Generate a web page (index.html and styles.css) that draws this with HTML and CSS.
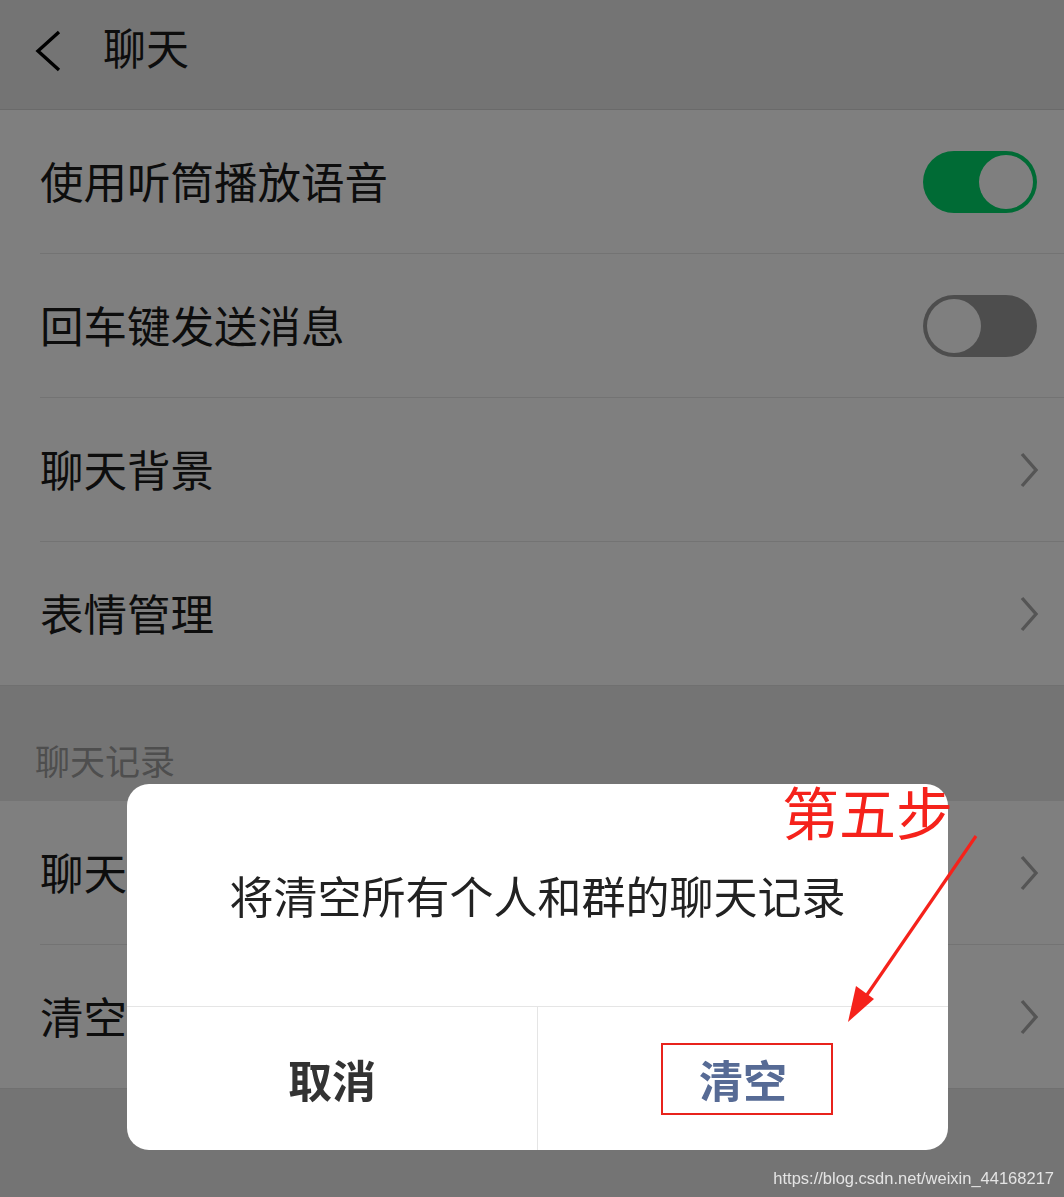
FILE: index.html
```html
<!DOCTYPE html>
<html lang="zh-CN">

<head>
    <meta charset="UTF-8">
    <meta name="viewport" content="width=device-width, initial-scale=1.0">
    <title>聊天</title>
    <link rel="stylesheet" href="styles.css">
</head>

<body>
    <header class="nav-bar">
        <svg class="back-icon" width="30" height="44" viewBox="0 0 30 44">
            <polyline points="25,3 4,22 25,41" fill="none" stroke="#000" stroke-width="3.4" stroke-linejoin="miter" />
        </svg>
        <h1 class="nav-title">聊天</h1>
    </header>

    <section class="group">
        <div class="cell">
            <span class="cell-label">使用听筒播放语音</span>
            <span class="switch on"><span class="knob"></span></span>
        </div>
        <div class="cell">
            <span class="cell-label">回车键发送消息</span>
            <span class="switch"><span class="knob"></span></span>
        </div>
        <div class="cell">
            <span class="cell-label">聊天背景</span>
            <svg class="arrow" width="20" height="38" viewBox="0 0 20 38">
                <polyline points="3,3 17,19 3,35" fill="none" stroke="#aaa" stroke-width="3.4" />
            </svg>
        </div>
        <div class="cell">
            <span class="cell-label">表情管理</span>
            <svg class="arrow" width="20" height="38" viewBox="0 0 20 38">
                <polyline points="3,3 17,19 3,35" fill="none" stroke="#aaa" stroke-width="3.4" />
            </svg>
        </div>
    </section>

    <div class="group-title">聊天记录</div>

    <section class="group">
        <div class="cell">
            <span class="cell-label">聊天记录迁移</span>
            <svg class="arrow" width="20" height="38" viewBox="0 0 20 38">
                <polyline points="3,3 17,19 3,35" fill="none" stroke="#aaa" stroke-width="3.4" />
            </svg>
        </div>
        <div class="cell">
            <span class="cell-label">清空聊天记录</span>
            <svg class="arrow" width="20" height="38" viewBox="0 0 20 38">
                <polyline points="3,3 17,19 3,35" fill="none" stroke="#aaa" stroke-width="3.4" />
            </svg>
        </div>
    </section>

    <div class="mask">
        <div class="dialog">
            <div class="dialog-body">将清空所有个人和群的聊天记录</div>
            <div class="dialog-footer">
                <div class="dialog-btn cancel">取消</div>
                <div class="dialog-btn confirm"><span class="mark-box">清空</span></div>
            </div>
        </div>

        <div class="step-note">第五步</div>
        <svg class="step-arrow" width="140" height="200" viewBox="0 0 140 200">
            <line x1="134" y1="4" x2="20" y2="170" stroke="#f5221b" stroke-width="3.2" />
            <polygon points="6,190 14,154 32,167" fill="#f5221b" />
        </svg>
    </div>

    <div class="watermark">https://blog.csdn.net/weixin_44168217</div>
</body>

</html>
```

FILE: styles.css
```css
body {
    margin: 0;
    width: 1064px;
    min-height: 1197px;
    background: #e9e9e9;
    font-family: "Noto Sans CJK SC", "Noto Sans", sans-serif;
    color: #1a1a1a;
    overflow: hidden;
    position: relative;
}

.nav-bar {
    height: 109px;
    display: flex;
    align-items: center;
    background: #e8e8e8;
    border-bottom: 1px solid #d4d4d4;
    box-sizing: content-box;
}

.back-icon {
    margin-left: 34px;
    margin-top: -8px;
}

.nav-title {
    margin: -17px 0 0 39px;
    font-size: 43px;
    font-weight: normal;
    line-height: 1;
}

.group {
    background: #fff;
    border-bottom: 1px solid #e0e0e0;
}

.cell {
    margin-left: 40px;
    padding-right: 27px;
    height: 143px;
    display: flex;
    align-items: center;
    justify-content: space-between;
    border-bottom: 1px solid #e6e6e6;
}

.cell:last-child {
    border-bottom: none;
    height: 143px;
}

.cell-label {
    font-size: 43.5px;
    line-height: 1;
    margin-top: -2px;
}

.switch {
    width: 114px;
    height: 62px;
    border-radius: 31px;
    background: #9b9b9b;
    display: flex;
    align-items: center;
    padding: 0 4px;
    box-sizing: border-box;
}

.switch.on {
    background: #00d66a;
    justify-content: flex-end;
}

.knob {
    width: 54px;
    height: 54px;
    border-radius: 50%;
    background: #fff;
}

.arrow {
    margin-right: -2px;
}

.group-title {
    height: 115px;
    padding-left: 35px;
    box-sizing: border-box;
    display: flex;
    align-items: flex-end;
    padding-bottom: 24px;
    font-size: 35px;
    line-height: 1;
    color: #9c9c9c;
}

.mask {
    position: fixed;
    inset: 0;
    background: rgba(0, 0, 0, 0.5);
}

.dialog {
    position: absolute;
    left: 127px;
    top: 784px;
    width: 821px;
    height: 366px;
    background: #fff;
    border-radius: 22px;
    display: flex;
    flex-direction: column;
    overflow: hidden;
}

.dialog-body {
    height: 223px;
    display: flex;
    align-items: center;
    justify-content: center;
    font-size: 44px;
    color: #222;
    border-bottom: 1px solid #e5e5e5;
    box-sizing: border-box;
    padding-top: 0;
}

.dialog-footer {
    flex: 1;
    display: flex;
}

.dialog-btn {
    flex: 1;
    display: flex;
    align-items: center;
    justify-content: center;
    font-size: 44px;
    font-weight: bold;
    line-height: 1;
}

.cancel {
    color: #333;
    border-right: 1px solid #e5e5e5;
}

.confirm {
    color: #576b95;
}

.mark-box {
    border: 2px solid #e8231c;
    padding: 12px 44px 12px 36px;
    margin-left: 8px;
}

.step-note {
    position: absolute;
    left: 782px;
    top: 776px;
    font-size: 57px;
    line-height: 1.2;
    color: #f5221b;
}

.step-arrow {
    position: absolute;
    left: 842px;
    top: 832px;
}

.watermark {
    position: absolute;
    right: 10px;
    bottom: 9px;
    font-family: "Liberation Sans", Arial, sans-serif;
    font-size: 16.5px;
    color: #e4e4e4;
}
```
